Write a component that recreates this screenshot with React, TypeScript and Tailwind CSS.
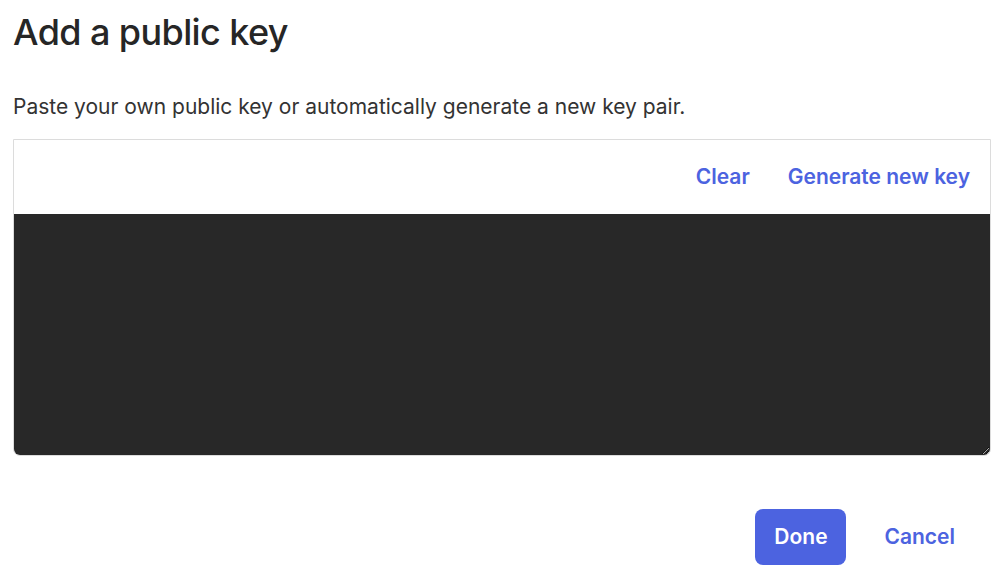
export default function App() {
  return (
    <div className="w-[1006px] h-[580px] bg-white font-['Inter',sans-serif] text-[#262626] px-[13px] pt-[11px]">
      <h1 className="text-[36px] leading-[42px] font-medium tracking-[-0.6px]">Add a public key</h1>
      <p className="mt-[40px] text-[21px] leading-[28px] text-[#333]">
        Paste your own public key or automatically generate a new key pair.
      </p>
      <div className="mt-[18px] w-[978px] border border-[#dcdcdc] rounded-b-[7px]">
        <div className="h-[74px] flex items-center justify-end gap-[38px] pr-[20px] bg-white">
          <button type="button" className="text-[21px] font-semibold text-[#4c63e0]">Clear</button>
          <button type="button" className="text-[21px] font-semibold text-[#4c63e0]">Generate new key</button>
        </div>
        <textarea
          className="block w-full h-[241px] bg-[#282828] text-white rounded-b-[6px] p-3 focus:outline-none"
          spellCheck={false}
        />
      </div>
      <div className="mt-[53px] flex justify-end items-center gap-[38px] pr-[38px]">
        <button type="button" className="w-[91px] h-[56px] rounded-[8px] bg-[#4c63e0] text-white text-[21px] font-semibold">
          Done
        </button>
        <button type="button" className="text-[21px] font-semibold text-[#4c63e0]">Cancel</button>
      </div>
    </div>
  );
}
